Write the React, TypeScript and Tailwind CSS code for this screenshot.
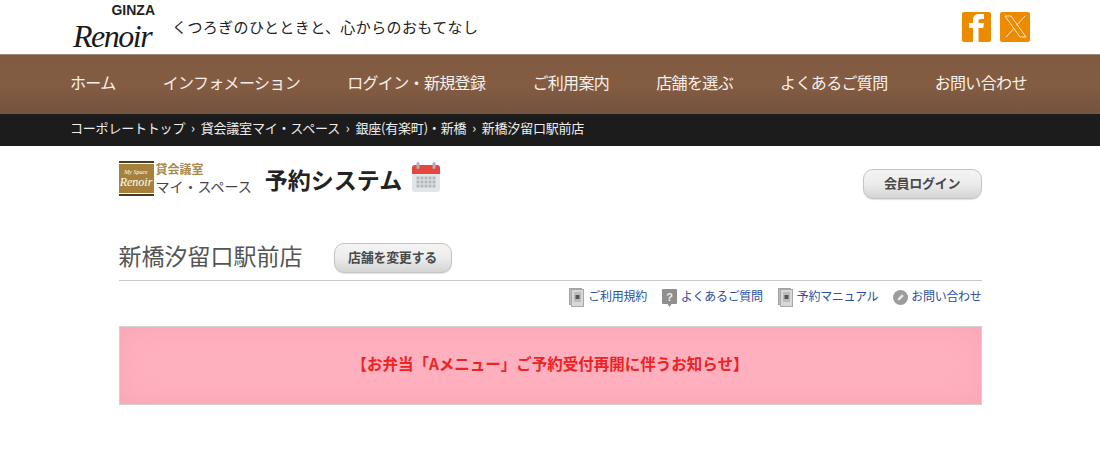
const JP = 'font-["Noto_Sans_CJK_JP","Noto_Sans",sans-serif]';

const navItems = [
  'ホーム',
  'インフォメーション',
  'ログイン・新規登録',
  'ご利用案内',
  '店舗を選ぶ',
  'よくあるご質問',
  'お問い合わせ',
];

const crumbs = ['コーポレートトップ', '貸会議室マイ・スペース', '銀座(有楽町)・新橋', '新橋汐留口駅前店'];

function DocIcon() {
  return (
    <svg width="15" height="19" viewBox="0 0 15 19">
      <rect x="0.5" y="0.5" width="12" height="16" fill="#bdbdbd" stroke="#a3a3a3" />
      <rect x="2.5" y="1.5" width="12" height="17" fill="#d8d8d8" stroke="#a8a8a8" />
      <rect x="5" y="4" width="7" height="10" fill="#bcbcbc" />
      <rect x="6.500" y="7" width="4" height="4" fill="#555" />
    </svg>
  );
}

function QuestionIcon() {
  return (
    <svg width="15" height="18" viewBox="0 0 15 18">
      <path d="M0 1a1 1 0 0 1 1-1h13a1 1 0 0 1 1 1v13a1 1 0 0 1-1 1H9.500L7.500 18l-2-3H1a1 1 0 0 1-1-1z" fill="#8f8f8f" />
      <text x="7.500" y="12" textAnchor="middle" fontSize="11" fontWeight="700" fill="#eee" fontFamily="Liberation Sans">?</text>
    </svg>
  );
}

function PencilIcon() {
  return (
    <svg width="15" height="15" viewBox="0 0 15 15">
      <circle cx="7.500" cy="7.500" r="7.500" fill="#9c9c9c" />
      <path d="M4.500 10.500l.6-2.400L9 4.200l1.800 1.800-3.900 3.900z" fill="#e8e8e8" />
    </svg>
  );
}

function CalendarIcon() {
  return (
    <svg width="28" height="30" viewBox="0 0 28 30">
      <rect x="0" y="3" width="28" height="27" rx="3" fill="#e2e5e8" />
      <path d="M0 12V6a3 3 0 0 1 3-3h22a3 3 0 0 1 3 3v6z" fill="#e5463e" />
      <rect x="4.500" y="0" width="3" height="7" rx="1.500" fill="#aeb2b7" />
      <rect x="20.500" y="0" width="3" height="7" rx="1.500" fill="#aeb2b7" />
      <g fill="#b4b8bd">
        {[14.500, 18.500, 22.500].map((y) =>
          [4.500, 8.500, 12.500, 16.500, 20.500].map((x) => <rect key={`${x}-${y}`} x={x} y={y} width="3" height="3" />),
        )}
      </g>
    </svg>
  );
}

function GrayButton({ label, className }: { label: string; className: string }) {
  return (
    <button
      className={`flex items-center justify-center rounded-[10px] border border-[#c4c4c4] bg-gradient-to-b from-[#f4f4f4] via-[#ececec] to-[#d4d4d4] pb-[3px] text-[13px] font-bold tracking-[-0.3px] text-[#4a4a4a] shadow-[0_1px_1px_rgba(0,0,0,0.12)] ${className}`}
    >
      {label}
    </button>
  );
}

export default function App() {
  return (
    <div className={`min-h-[450px] bg-white ${JP}`}>
      {/* ヘッダー */}
      <header className="mx-auto flex h-[54px] w-[960px] items-center justify-between">
        <div className="flex items-center">
          <div className="mb-[2px] ml-[3px] flex h-[44px] w-[82px] flex-col">
            <span className="self-end font-['Liberation_Sans'] text-[14px] font-bold leading-[12px] text-[#222]">
              GINZA
            </span>
            <span className="mt-[5px] font-['Liberation_Serif'] text-[32px] italic leading-[30px] tracking-[-1.5px] text-[#1a1a1a]">
              Renoir
            </span>
          </div>
          <p className="ml-[17px] text-[15px] tracking-[0.4px] text-[#222]">くつろぎのひとときと、心からのおもてなし</p>
        </div>
        <div className="mb-[1px] flex gap-[9px]">
          <div className="h-[30px] w-[29px] rounded-[2px] bg-[#ec8a00]">
            <svg width="29" height="30" viewBox="0 0 29 30">
              <path d="M11 30V16H7v-5h4V8c0-4 2.500-6 6-6h5v5h-3c-1.500 0-2.500.7-2.500 2v2H22l-.8 5h-4.700v14z" fill="#fff" />
            </svg>
          </div>
          <div className="flex h-[30px] w-[30px] items-center justify-center rounded-[2px] bg-[#ec8a00]">
            <svg width="25" height="25" viewBox="0 0 25 25" fill="none" stroke="#f8e4c8" strokeWidth="1">
              <path d="M2 2h6l15 21h-6z" />
              <path d="M22 2 13.500 11.500M11 14.500 3 23" />
            </svg>
          </div>
        </div>
      </header>

      {/* グローバルナビ */}
      <nav className="h-[60px] border-t border-[#a08a7a] bg-gradient-to-b from-[#7f5a41] via-[#845c42] to-[#73533e]">
        <ul className="mx-auto flex h-full w-[960px] items-center gap-[47.1px] pb-[6px] text-[16px] tracking-[-0.65px] text-[#f5f0ec]">
          {navItems.map((item) => (
            <li key={item} className="whitespace-nowrap">{item}</li>
          ))}
        </ul>
      </nav>

      {/* パンくず */}
      <div className="h-[32px] bg-[#1c1c1c]">
        <ul className="mx-auto flex w-[960px] text-[13px] leading-[27px] tracking-[-0.2px] text-[#eeeeee]">
          {crumbs.map((crumb, i) => (
            <li key={crumb} className="flex whitespace-nowrap">
              {i > 0 && <span className="w-[15.5px] text-center">›</span>}
              {crumb}
            </li>
          ))}
        </ul>
      </div>

      <main className="mx-auto w-[863px]">
        <div className="flex h-[97px] items-start justify-between">
          <div className="mt-[15px] flex items-center">
            <div className="flex h-[35px] w-[35px] flex-col justify-center border-y-[2px] border-[#4a3a2a] py-[1px]">
              <div className="flex h-full flex-col items-center justify-center bg-[#a5813a] text-white">
                <span className="font-['Liberation_Serif'] text-[6px] italic leading-[7px]">My Space</span>
                <span className="font-['Liberation_Serif'] text-[12px] italic leading-[12px]">Renoir</span>
              </div>
            </div>
            <div className="ml-[2px] flex flex-col">
              <span className="text-[12px] font-bold leading-[16px] text-[#a98a4c]">貸会議室</span>
              <span className="text-[14px] leading-[19px] text-[#444]">マイ・スペース</span>
            </div>
            <h1 className="ml-[13px] text-[23px] font-bold leading-[30px] text-[#222]">予約システム</h1>
            <div className="mb-[3px] ml-[10px]">
              <CalendarIcon />
            </div>
          </div>
          <GrayButton label="会員ログイン" className="mt-[23px] h-[30px] w-[119px]" />
        </div>

        <div className="flex h-[38px] items-start border-b border-[#c8c8c8]">
          <h2 className="text-[23px] leading-[24px] text-[#555]">新橋汐留口駅前店</h2>
          <GrayButton label="店舗を変更する" className="ml-[31px] h-[30px] w-[118px]" />
        </div>

        <div className="mt-[6px] flex items-center justify-end text-[12px] tracking-[-0.3px] text-[#2a4fa0]">
          <a className="flex items-center gap-[4px]"><DocIcon /><span className="mb-[3px]">ご利用規約</span></a>
          <a className="ml-[15px] flex items-center gap-[4px]"><QuestionIcon /><span className="mb-[3px]">よくあるご質問</span></a>
          <a className="ml-[15px] flex items-center gap-[4px]"><DocIcon /><span className="mb-[3px]">予約マニュアル</span></a>
          <a className="ml-[15px] flex items-center gap-[3px]"><PencilIcon /><span className="mb-[3px]">お問い合わせ</span></a>
        </div>

        <div className="mt-[18px] flex h-[79px] items-center justify-center border border-[#d2d2d2] bg-[#ffb0bf] pb-[4px] text-[15.5px] font-bold text-[#ee2222] shadow-[inset_0_0_30px_rgba(190,90,110,0.12)]">
          【お弁当「Aメニュー」ご予約受付再開に伴うお知らせ】
        </div>
      </main>
    </div>
  );
}
